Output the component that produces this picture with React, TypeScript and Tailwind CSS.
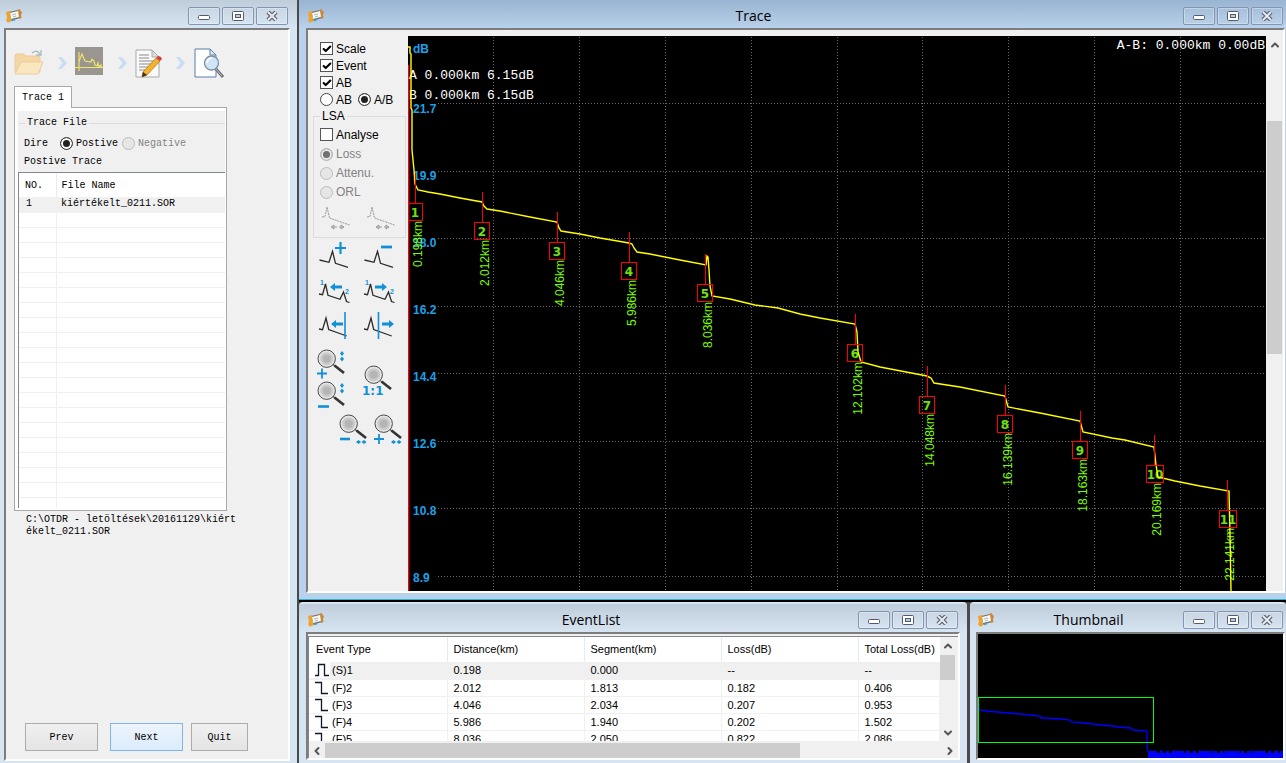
import { useId } from 'react'
import type { ReactNode } from 'react'
import { Check, ChevronDown, ChevronLeft, ChevronRight, ChevronUp } from 'lucide-react'

interface TraceEvent {
  id: number
  x: number
  y: number
  km: string
}

const events: TraceEvent[] = [
  { id: 1, x: 415, y: 173, km: '0.198km' },
  { id: 2, x: 482, y: 192, km: '2.012km' },
  { id: 3, x: 557, y: 212, km: '4.046km' },
  { id: 4, x: 629, y: 232, km: '5.986km' },
  { id: 5, x: 705, y: 254, km: '8.036km' },
  { id: 6, x: 855, y: 314, km: '12.102km' },
  { id: 7, x: 927, y: 366, km: '14.048km' },
  { id: 8, x: 1005, y: 385, km: '16.139km' },
  { id: 9, x: 1080, y: 411, km: '18.163km' },
  { id: 10, x: 1154, y: 435, km: '20.169km' },
  { id: 11, x: 1227, y: 480, km: '22.141km' },
]

const eventRows = [
  ['(S)1', '0.198', '0.000', '--', '--'],
  ['(F)2', '2.012', '1.813', '0.182', '0.406'],
  ['(F)3', '4.046', '2.034', '0.207', '0.953'],
  ['(F)4', '5.986', '1.940', '0.202', '1.502'],
  ['(F)5', '8.036', '2.050', '0.822', '2.086'],
]

const scale = [
  { label: '21.7', y: 103 },
  { label: '19.9', y: 171 },
  { label: '18.0', y: 238 },
  { label: '16.2', y: 306 },
  { label: '14.4', y: 373 },
  { label: '12.6', y: 441 },
  { label: '10.8', y: 508 },
  { label: '8.9', y: 576 },
]

const gridX = [493, 579, 665, 751, 837, 922, 1008, 1094, 1180]

const tracePoints =
  '408,47 410,47 410,53 411,54 411,108 412,110 412,150 414,170 415,184 418,190 428,192 440,194 460,198 482,202 484,206 487,209 500,211 530,217 557,222 559,228 561,231 580,234 600,238 629,243 632,244 634,248 637,252 650,254 680,260 706,265 707,256 708,257 709,270 710,286 712,296 730,299 755,305 778,308 800,314 820,318 855,324 857,332 858,352 861,362 880,367 927,376 931,378 934,383 960,387 1005,396 1008,407 1040,413 1080,421 1083,432 1112,438 1125,440 1154,447 1156,465 1158,477 1175,481 1200,486 1229,491 1230,535 1231,591'

const thumbPoints =
  '979,704 979,710 987,711 997,712 1009,713 1021,714 1029,715 1040,716 1041,718 1045,718 1061,719 1070,720 1071,722 1083,723 1093,724 1101,725 1113,726 1118,727 1131,728 1133,730 1147,731 1147,745 1148,752'

function AppIcon() {
  return (
    <svg viewBox="0 0 16 14" className="h-[14px] w-4 shrink-0" aria-hidden="true">
      <path d="M3 3l9-2 2 8-10 3z" fill="#77706a" />
      <path d="M0 3l4-1 .5 3-1 1 2 4-1 3-3 .5L0 11l1-2z" fill="#f0a229" />
      <path d="M11 1l3-1 .5 2 1.500 1-1 3 .5 3-2 1-1-3z" fill="#c8873a" />
      <path d="M4 4l8-2 1 6-8 2z" fill="#f7f7f4" />
      <path d="M6 6l4-1M7 8l3-1" stroke="#9ba5ab" strokeWidth="0.8" />
      <path d="M6 11.500l3-1" stroke="#2aa7d8" strokeWidth="1.400" />
    </svg>
  )
}

function CaptionButtons() {
  const button = 'flex h-[18px] w-8 items-center justify-center rounded-[2px] border border-[#8296b4] bg-white/5 shadow-[inset_0_0_0_1px_rgba(255,255,255,0.3)]'
  return (
    <div className="flex gap-0.5">
      <button type="button" aria-label="Minimize" className={button}>
        <svg viewBox="0 0 12 10" className="h-[10px] w-3">
          <rect x="0.5" y="4.5" width="11" height="4" rx="1" fill="#fff" stroke="#555a6a" />
        </svg>
      </button>
      <button type="button" aria-label="Maximize" className={button}>
        <svg viewBox="0 0 12 10" className="h-[10px] w-3">
          <rect x="0.5" y="0.5" width="11" height="9" rx="1" fill="#fff" stroke="#555a6a" />
          <rect x="3.5" y="3.5" width="5" height="3" fill="#b9cde4" stroke="#555a6a" />
        </svg>
      </button>
      <button type="button" aria-label="Close" className={button}>
        <svg viewBox="0 0 12 10" className="h-[10px] w-3">
          <path d="M2 1l8 8M10 1l-8 8" stroke="#5f6473" strokeWidth="4.400" />
          <path d="M2 1l8 8M10 1l-8 8" stroke="#e9eef5" strokeWidth="1.800" />
        </svg>
      </button>
    </div>
  )
}

interface WindowProps {
  title?: string
  frame: string
  titleBar: string
  children: ReactNode
}

function Window({ title, frame, titleBar, children }: WindowProps) {
  return (
    <section className={`flex min-h-0 min-w-0 flex-col ${frame}`}>
      <header className={`flex h-7 shrink-0 items-center pt-1 ${titleBar}`}>
        <AppIcon />
        <h2 className="flex-1 text-center font-['Open_Sans','Noto_Sans',sans-serif] text-sm text-black">{title}</h2>
        <CaptionButtons />
      </header>
      <div className="flex min-h-0 flex-1 flex-col border-2 border-t-[#7d7d7d] border-r-white border-b-white border-l-[#7d7d7d] bg-[#f0f0f0]">
        {children}
      </div>
    </section>
  )
}

interface OptionProps {
  label: string
  name?: string
  checked?: boolean
  disabled?: boolean
}

function CheckOption({ label, checked }: OptionProps) {
  const id = useId()
  return (
    <div className="flex h-[17px] items-center gap-[3px]">
      <span className="relative flex">
        <input id={id} type="checkbox" defaultChecked={checked} className="peer size-[13px] appearance-none border border-[#555] bg-white" />
        <Check strokeWidth={5} className="pointer-events-none absolute top-0.5 left-0.5 hidden size-[10px] text-black peer-checked:block" />
      </span>
      <label htmlFor={id}>{label}</label>
    </div>
  )
}

function RadioOption({ label, name, checked, disabled }: OptionProps) {
  const id = useId()
  return (
    <div className="flex items-center gap-[3px]">
      <input
        id={id}
        type="radio"
        name={name}
        defaultChecked={checked}
        disabled={disabled}
        className="size-[13px] shrink-0 appearance-none rounded-full border border-[#444] bg-white checked:bg-[#222] checked:shadow-[inset_0_0_0_2px_white] disabled:border-[#bbb] disabled:bg-[#e6e6e6] disabled:checked:bg-[#707070] disabled:checked:shadow-[inset_0_0_0_2px_#e6e6e6]"
      />
      <label htmlFor={id} className={disabled ? 'text-[#838383]' : ''}>{label}</label>
    </div>
  )
}

function StepArrow() {
  return (
    <svg viewBox="0 0 10 12" className="h-3 w-[10px]" aria-hidden="true">
      <path d="M0 0h3.500L9 6l-5.500 6H0l4.500-6z" fill="#c9dcf5" />
    </svg>
  )
}

function Steps() {
  return (
    <div className="flex h-[34px] items-center">
      <svg viewBox="0 0 30 26" className="mr-[14px] h-[26px] w-[30px]" aria-label="Open">
        <path d="M1 6q0-2 2-2h7l2 2h13q1 0 1 2v14H1z" fill="#f3d7a6" stroke="#ecc998" />
        <path d="M7 12h22l-5 12H1z" fill="#fae7c0" stroke="#eccd9c" />
        <path d="M18 3q5-4 8 1M27 0v5h-5" fill="none" stroke="#a9b8c4" strokeWidth="1.3" />
      </svg>
      <StepArrow />
      <svg viewBox="0 0 28 28" className="mx-[7px] mb-1 size-7" aria-label="Trace">
        <rect width="28" height="28" fill="#9b9590" />
        <path d="M4 5v19M0 20.500h28" fill="none" stroke="#ece56a" strokeWidth="1.200" />
        <path d="M4 14l3-7 2 5 1 2 6 1 1-3 2 2 1 4 2 1 1-3 1 4 2-2 1 3" fill="none" stroke="#ece56a" strokeWidth="1.200" />
      </svg>
      <span className="pl-2"><StepArrow /></span>
      <svg viewBox="0 0 28 30" className="mx-[7px] h-[30px] w-7" aria-label="Edit">
        <path d="M1 2h16l7 7v20H1z" fill="#fafafa" stroke="#a9a9a9" />
        <path d="M17 2v7h7z" fill="#ddd" stroke="#a9a9a9" />
        <path d="M4 7h10M4 10h10M4 13h16M4 16h14M4 19h10M4 22h8" stroke="#8a8a8a" />
        <path d="M8 24L21 10l4 3-13 14-5 2z" fill="#f5b22b" stroke="#a8700f" strokeWidth="0.700" />
        <path d="M21 10l2-2q3 0 4 3l-2 2z" fill="#d5403f" />
        <path d="M8 24l4 3-5 2z" fill="#3c3024" />
      </svg>
      <span className="pl-1.5"><StepArrow /></span>
      <svg viewBox="0 0 31 31" className="ml-2 size-[31px]" aria-label="Preview">
        <path d="M1 1h15l6 6v22H1z" fill="#fff" stroke="#5b7fa8" />
        <path d="M16 1v6h6z" fill="#e3ebf4" stroke="#5b7fa8" />
        <path d="M22 21l7 8" stroke="#6d7074" strokeWidth="3" />
        <path d="M22 21l6 7" stroke="#b9bcc0" strokeWidth="1" />
        <circle cx="17.500" cy="15" r="7" fill="#cfe5fa" stroke="#7f8fa1" strokeWidth="1.300" />
        <path d="M13 15q1-5 5-5" fill="none" stroke="#fff" strokeWidth="1.500" />
      </svg>
    </div>
  )
}

function FilePanel() {
  return (
    <>
      <div className="px-2 pt-4">
        <Steps />
        <div className="mt-1.5 flex" role="tablist">
          <button type="button" role="tab" aria-selected="true" className="relative -mb-px h-[22px] w-[58px] border border-b-0 border-[#a9a9a9] bg-white">
            Trace 1
          </button>
        </div>
        <div className="mr-[53px] flex h-[404px] flex-col border border-[#a9a9a9] bg-white p-[3px] pr-px pb-0.5">
          <div className="h-[61px] shrink-0 bg-[#f0f0f0] pt-1.5">
            <fieldset className="border-t border-[#dcdcdc] pl-1.5">
              <legend className="ml-px px-0.5 leading-3">Trace File</legend>
              <div className="mt-1 flex h-[21px] items-center">
                <span className="w-9">Dire</span>
                <RadioOption name="direction" label="Postive" checked />
                <span className="w-1" />
                <RadioOption name="direction" label="Negative" disabled />
              </div>
              <p className="leading-4">Postive Trace</p>
            </fieldset>
          </div>
          <div className="min-h-0 flex-1 overflow-hidden border-t border-l border-[#828790]">
            <table className="w-full table-fixed border-collapse text-left">
              <thead>
                <tr className="h-6">
                  <th className="w-[37px] border-r border-[#e5eef8] pl-1.5 font-normal">NO.</th>
                  <th className="pl-[5px] font-normal">File Name</th>
                </tr>
              </thead>
              <tbody>
                <tr className="h-[15px] bg-[#f0f0f0] leading-[14px]">
                  <td className="border-b border-[#f0f0f0] pl-[7px]">1</td>
                  <td className="border-b border-[#f0f0f0] pl-[5px]">kiértékelt_0211.SOR</td>
                </tr>
                {Array.from({ length: 20 }, (_, i) => (
                  <tr key={i} className="h-[15px]">
                    <td className="border-r border-b border-[#f0f0f0]" />
                    <td className="border-b border-[#f0f0f0]" />
                  </tr>
                ))}
              </tbody>
            </table>
          </div>
        </div>
        <p className="mt-[3px] mr-10 pl-3 leading-3 break-all">C:\OTDR - letöltések\20161129\kiértékelt_0211.SOR</p>
      </div>
      <div className="mt-auto mb-2 flex pl-[19px]">
        <button type="button" className="mr-3 h-7 w-[73px] border border-[#acacac] bg-linear-to-b from-[#f0f0f0] to-[#e4e4e4]">Prev</button>
        <button type="button" className="mr-2 h-7 w-[73px] border border-[#7eb4ea] bg-linear-to-b from-[#ecf4fc] to-[#dcecfc]">Next</button>
        <button type="button" className="h-7 w-[57px] border border-[#acacac] bg-linear-to-b from-[#f0f0f0] to-[#e4e4e4]">Quit</button>
      </div>
    </>
  )
}

function ToolButton({ label, children }: { label: string; children: ReactNode }) {
  return (
    <button type="button" aria-label={label} className="h-8 w-[34px] shrink-0">
      <svg viewBox="0 0 34 32" className="h-8 w-[34px]" fill="none" stroke="#2e2a2a" strokeWidth="1.300">
        {children}
      </svg>
    </button>
  )
}

const blue = '#1290d6'

function Magnifier() {
  return (
    <>
      <circle cx="10.700" cy="11.700" r="8.700" fill="#e4e4e4" stroke="#4a4a4a" strokeWidth="1" />
      <circle cx="10.700" cy="11.700" r="6.500" fill="#c9c9c9" stroke="none" />
      <circle cx="10.700" cy="11.700" r="4" fill="#b5b5b5" stroke="none" />
      <path d="M17 17.500l2 1.500" stroke="#555" />
      <path d="M18.500 18.500l9.500 7.500" stroke="#333" strokeWidth="2.600" />
    </>
  )
}

function ArrowMark({ x, y, dir }: { x: number; y: number; dir: 'left' | 'right' }) {
  return dir === 'left' ? (
    <path d={`M${x} ${y}l5-4v2.500h7v3h-7v2.500z`} fill={blue} stroke="none" />
  ) : (
    <path d={`M${x + 12} ${y}l-5-4v2.500h-7v3h7v2.500z`} fill={blue} stroke="none" />
  )
}

function Diamonds({ vertical }: { vertical?: boolean }) {
  return vertical ? (
    <path d="M26 4l2 2.500-2 2.500-2-2.500zM26 9.500l2 2.500-2 2.500-2-2.500z" fill={blue} stroke="none" />
  ) : (
    <path d="M20.500 28l2.500 2-2.500 2-2.500-2zM26 28l2.500 2-2.500 2-2.500-2z" fill={blue} stroke="none" />
  )
}

function LsaIcon({ label }: { label: string }) {
  return (
    <button type="button" disabled aria-label={label} className="h-7 w-[34px]">
      <svg viewBox="0 0 34 28" className="h-7 w-[34px]" fill="none" stroke="#9c9c9c">
        <path d="M2 14l3-.500L7 4l2.500 11 20 7" strokeDasharray="2 0.700" />
        <path d="M12 24h5M19 24h5M14 22l-3 2 3 2zM21 22l3 2-3 2z" />
      </svg>
    </button>
  )
}

function SidePanel() {
  return (
    <aside className="w-[100px] shrink-0 font-['Liberation_Sans',Arial,sans-serif] text-xs">
      <div className="pt-1 pl-3">
        <CheckOption label="Scale" checked />
        <CheckOption label="Event" checked />
        <CheckOption label="AB" checked />
        <div className="flex h-[17px] items-center gap-1.5">
          <RadioOption name="cursor" label="AB" />
          <RadioOption name="cursor" label="A/B" checked />
        </div>
      </div>
      <fieldset className="mr-0.5 ml-[5px] h-[130px] border border-[#dcdcdc] pl-1.5">
        <legend className="px-0.5 leading-4">LSA</legend>
        <div className="flex flex-col gap-1 pt-0.5">
          <CheckOption label="Analyse" />
          <div className="flex flex-col gap-[5px] leading-[14px]">
            <RadioOption name="lsa" label="Loss" checked disabled />
            <RadioOption name="lsa" label="Attenu." disabled />
            <RadioOption name="lsa" label="ORL" disabled />
          </div>
        </div>
        <div className="flex gap-[11px] pt-1">
          <LsaIcon label="LSA start" />
          <LsaIcon label="LSA end" />
        </div>
      </fieldset>
      <div className="grid grid-cols-[45px_45px] gap-y-[3px] pt-1 pl-[10px]">
        <ToolButton label="Add event">
          <path d="M1.500 18l9.500 2.300 3.500-11 3 12 12.500 4" />
          <path d="M17 6h11M22.500 0v12" stroke={blue} strokeWidth="2.200" />
        </ToolButton>
        <ToolButton label="Remove event">
          <path d="M1.500 18l9.500 2.300 3.500-11 3 12 12.500 4" />
          <path d="M18 5h11" stroke={blue} strokeWidth="2.800" />
        </ToolButton>
        <ToolButton label="Previous event">
          <path d="M1 17l3.500 .700L7.500 7 10 18.300l12 4L25.500 15l3 9.500 3 1" />
          <ArrowMark x={12} y={10} dir="left" />
          <text x="2" y="8" fontSize="7" fontWeight="bold" fill={blue} stroke="none">1</text>
          <text x="27" y="17" fontSize="7" fontWeight="bold" fill={blue} stroke="none">2</text>
        </ToolButton>
        <ToolButton label="Next event">
          <path d="M1 17l3.500 .700L7.500 7 10 18.300l12 4L25.500 15l3 9.500 3 1" />
          <ArrowMark x={12} y={10} dir="right" />
          <text x="2" y="8" fontSize="7" fontWeight="bold" fill={blue} stroke="none">1</text>
          <text x="27" y="17" fontSize="7" fontWeight="bold" fill={blue} stroke="none">2</text>
        </ToolButton>
        <ToolButton label="Move cursor left">
          <path d="M1 17l3.500.700L8 6l2.700 11.500 18 6.500" />
          <path d="M27 0v27" stroke={blue} strokeWidth="1.600" />
          <ArrowMark x={13} y={12} dir="left" />
        </ToolButton>
        <ToolButton label="Move cursor right">
          <path d="M1 17l3.500.700L8 6l2.700 11.500 18 6.500" />
          <path d="M15.500 0v27" stroke={blue} strokeWidth="1.600" />
          <ArrowMark x={19} y={12} dir="right" />
        </ToolButton>
      </div>
      <div className="flex items-center gap-[11px] pt-[3px] pl-2">
        <div className="flex flex-col">
          <ToolButton label="Zoom in vertically">
            <Magnifier />
            <Diamonds vertical />
            <path d="M1 26.500h10M6 21.500v10" stroke={blue} strokeWidth="1.800" />
          </ToolButton>
          <ToolButton label="Zoom out vertically">
            <Magnifier />
            <Diamonds vertical />
            <path d="M2 27.500h11" stroke={blue} strokeWidth="2.600" />
          </ToolButton>
        </div>
        <button type="button" aria-label="Reset zoom" className="h-9 w-[34px]">
          <svg viewBox="-2 -2 34 36" className="h-9 w-[34px]" fill="none">
            <Magnifier />
            <text x="-1" y="32" fontSize="12" className="font-['DejaVu_Sans',sans-serif] font-bold" fill={blue}>1:1</text>
          </svg>
        </button>
      </div>
      <div className="flex gap-px pt-px pl-[30px]">
        <ToolButton label="Zoom out horizontally">
          <Magnifier />
          <path d="M2 27h10" stroke={blue} strokeWidth="2.600" />
          <Diamonds />
        </ToolButton>
        <ToolButton label="Zoom in horizontally">
          <Magnifier />
          <path d="M1 27h10M6 22v10" stroke={blue} strokeWidth="1.800" />
          <Diamonds />
        </ToolButton>
      </div>
    </aside>
  )
}

function TracePlot() {
  return (
    <svg viewBox="408 36 858 555" preserveAspectRatio="xMinYMin slice" className="block h-full w-full bg-black font-['Liberation_Sans',Arial,sans-serif]" role="img" aria-label="OTDR trace">
      <g stroke="#6a6a6a" strokeDasharray="1 2" shapeRendering="crispEdges">
        {gridX.map((x) => (
          <line key={x} x1={x + 0.5} x2={x + 0.5} y1="37" y2="591" />
        ))}
        {scale.map((s) => (
          <line key={s.label} x1="438" x2="1266" y1={s.y + 0.5} y2={s.y + 0.5} />
        ))}
      </g>
      <path d="M408.500 65v526" stroke="#f00" strokeWidth="1.500" />
      <g fill="#1ea0e8" fontSize="12" fontWeight="bold">
        <text x="413" y="53">dB</text>
        {scale.map((s, i) => (
          <text key={s.label} x="413" y={113 + i * 67}>{s.label}</text>
        ))}
      </g>
      <g fill="#fff" fontSize="13" className="font-['Liberation_Mono',monospace]">
        <text x="409" y="79">A 0.000km 6.15dB</text>
        <text x="409" y="99">B 0.000km 6.15dB</text>
        <text x="1265" y="49" textAnchor="end">A-B: 0.000km 0.00dB</text>
      </g>
      {events.map((e) => (
        <g key={e.id}>
          <text transform={`translate(${e.x + 7} ${e.y + 48}) rotate(-90)`} textAnchor="end" fontSize="12" fill="#7cfc00">{e.km}</text>
          <text x={e.x + (e.id > 9 ? 1 : 0)} y={e.y + 44} textAnchor="middle" fontSize="12" className="font-['DejaVu_Sans',sans-serif] font-bold" fill="#6fe010">{e.id}</text>
        </g>
      ))}
      <polyline points={tracePoints} fill="none" stroke="#ff0" strokeWidth="1.400" />
      <g fill="none" stroke="#f00" shapeRendering="crispEdges">
        {events.map((e) => (
          <g key={e.id}>
            <line x1={e.x + 0.5} x2={e.x + 0.5} y1={e.y} y2={e.y + 30} />
            <rect x={e.x - 7.5} y={e.y + 30.5} width={e.id > 9 ? 17 : 15} height="17" />
          </g>
        ))}
      </g>
    </svg>
  )
}

function StepIcon({ pulse }: { pulse: boolean }) {
  return (
    <svg viewBox="0 0 14 14" className="size-[14px] shrink-0" fill="none" stroke="#111827" strokeWidth="1.300" aria-hidden="true">
      <path d={pulse ? 'M0 12.500h3.500v-11h6v11H14' : 'M0 1.500h6.500v11H13'} />
    </svg>
  )
}

function EventList() {
  return (
    <div className="mt-0.5 flex min-h-0 flex-1 flex-col border-t border-l border-[#828790] font-['Liberation_Sans',Arial,sans-serif] text-[11px] text-black">
      <div className="mr-[3px] flex min-h-0 flex-1">
        <div className="min-h-0 flex-1 overflow-hidden bg-white">
          <table className="w-full table-fixed border-collapse text-left">
            <thead>
              <tr className="h-[25px]">
                <th className="w-[138px] border-r border-[#e0ecfa] pl-[7px] font-normal">Event Type</th>
                <th className="w-[137px] border-r border-[#e0ecfa] pl-1.5 font-normal">Distance(km)</th>
                <th className="w-[137px] border-r border-[#e0ecfa] pl-1.5 font-normal">Segment(km)</th>
                <th className="w-[137px] border-r border-[#e0ecfa] pl-1.5 font-normal">Loss(dB)</th>
                <th className="pl-1.5 font-normal whitespace-nowrap">Total Loss(dB)</th>
              </tr>
            </thead>
            <tbody>
              {eventRows.map((row, i) => (
                <tr key={row[0]} className={`h-[17px] leading-4 ${i === 0 ? 'bg-[#f0f0f0]' : ''}`}>
                  <td className="border-r border-b border-[#f0f0f0]">
                    <span className="flex items-center">
                      <span className="flex h-4 w-[21px] items-center bg-white pl-1.5">
                        <StepIcon pulse={i === 0} />
                      </span>
                      <span className="pl-0.5">{row[0]}</span>
                    </span>
                  </td>
                  {row.slice(1).map((cell, j) => (
                    <td key={j} className="border-r border-b border-[#f0f0f0] pl-1.5">{cell}</td>
                  ))}
                </tr>
              ))}
            </tbody>
          </table>
        </div>
        <div className="flex w-[15px] flex-col items-center bg-[#f0f0f0] text-[#555]">
          <ChevronUp strokeWidth={4} className="my-[3px] size-3 shrink-0" />
          <div className="h-[25px] w-full bg-[#cdcdcd]" />
          <ChevronDown strokeWidth={4} className="mt-auto mb-0.5 size-3 shrink-0" />
        </div>
      </div>
      <div className="mt-0.5 flex h-[15px] items-center bg-[#f0f0f0] text-[#555]">
        <ChevronLeft strokeWidth={4} className="mx-0.5 size-3 shrink-0" />
        <div className="h-full flex-1">
          <div className="h-full w-[77%] bg-[#cdcdcd]" />
        </div>
        <ChevronRight strokeWidth={4} className="mx-0.5 size-3 shrink-0" />
      </div>
    </div>
  )
}

function Thumbnail() {
  return (
    <svg viewBox="978 634 305 124" preserveAspectRatio="xMinYMin slice" className="block h-full w-full bg-black" role="img" aria-label="Trace overview">
      <polyline points={thumbPoints} fill="none" stroke="#00f" strokeWidth="1.300" />
      <g fill="#00f" shapeRendering="crispEdges">
        <rect x="1148" y="753" width="135" height="7" />
        {Array.from({ length: 135 }, (_, i) => (
          <rect key={i} x={1148 + i} y={i % 13 === 12 ? 750 : (Math.floor(i / 3) * 5) % 9 < 6 ? 751 : 753} width="1" height="4" />
        ))}
      </g>
      <rect x="978.500" y="697.500" width="175" height="45" fill="none" stroke="#0f0" shapeRendering="crispEdges" />
    </svg>
  )
}

export default function App() {
  return (
    <div className="flex h-screen min-h-[640px] overflow-hidden bg-[#4a4a4a] font-['Liberation_Mono','Noto_Sans_CJK_SC',monospace] text-[10px] text-black">
      <div className="mr-0.5 flex w-[297px] shrink-0 *:flex-1">
        <Window frame="bg-[#d7e4f2] pr-[7px] pb-0.5 pl-1" titleBar="-mr-[7px] -ml-1 bg-linear-to-b from-[#bfcddb] to-[#d7e4f2] pr-[9px] pl-1.5">
          <FilePanel />
        </Window>
      </div>
      <div className="flex min-w-0 flex-1 flex-col">
        <div className="flex min-h-0 flex-1 border-b-2 border-black *:flex-1">
          <Window title="Trace" frame="border-b border-[#2cb5d0] bg-[#b9d1ea] pr-px pb-1.5 pl-[7px]" titleBar="-mr-px -ml-[7px] bg-linear-to-b from-[#99b4d1] to-[#b9d1ea] pr-[3px] pl-[9px]">
            <div className="flex min-h-0 flex-1 pt-1.5">
              <SidePanel />
              <div className="min-h-0 min-w-0 flex-1">
                <TracePlot />
              </div>
              <div className="flex w-[17px] flex-col items-center text-[#555]">
                <ChevronUp strokeWidth={4} className="mt-[3px] size-3 shrink-0" />
                <div className="mt-[70px] h-[233px] w-[15px] bg-[#cdcdcd]" />
              </div>
            </div>
          </Window>
        </div>
        <div className="flex h-[161px] shrink-0 gap-[3px]">
          <div className="flex min-w-0 flex-1 *:flex-1">
            <Window title="EventList" frame="rounded-t bg-[#d7e4f2] pt-0.5 pr-[7px] pb-[3px] pl-[7px]" titleBar="-mr-[7px] -ml-[7px] bg-linear-to-b from-[#bfcddb] to-[#d7e4f2] pr-[9px] pl-[9px]">
              <EventList />
            </Window>
          </div>
          <div className="flex w-[316px] shrink-0 *:flex-1">
            <Window title="Thumbnail" frame="rounded-t bg-[#d7e4f2] pt-0.5 pr-px pb-[3px] pl-1.5" titleBar="-mr-px -ml-1.5 bg-linear-to-b from-[#bfcddb] to-[#d7e4f2] pr-[3px] pl-2">
              <Thumbnail />
            </Window>
          </div>
        </div>
      </div>
    </div>
  )
}
